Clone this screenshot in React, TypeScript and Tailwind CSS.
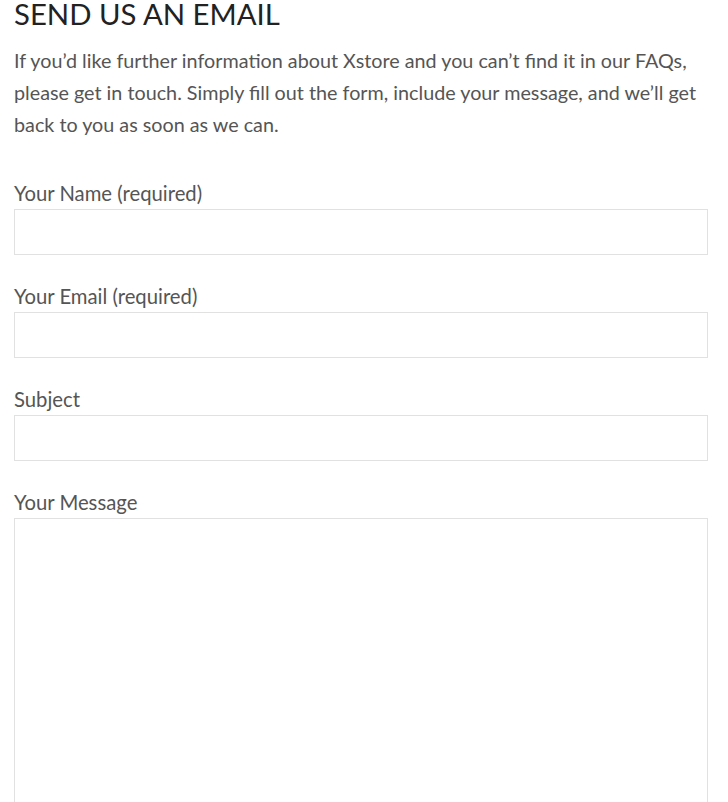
export default function App() {
  const fields = ['Your Name (required)', 'Your Email (required)', 'Subject'];
  return (
    <div className="min-h-screen bg-white pl-[14px] font-['Lato','Liberation_Sans',sans-serif]">
      <div className="w-[694px]">
        <h2 className="text-[29.3px] leading-[28px] text-[#222] font-normal">SEND US AN EMAIL</h2>
        <p className="mt-[16.5px] text-[19.75px] leading-[32px] text-[#555]">
          If you’d like further information about Xstore and you can’t find it in our FAQs,
          <br />
          please get in touch. Simply fill out the form, include your message, and we’ll get
          <br />
          back to you as soon as we can.
        </p>
        <form className="mt-[39.5px] flex flex-col gap-[28px]">
          {fields.map((f) => (
            <label key={f} className="block">
              <span className="block text-[20.3px] leading-[27px] text-[#555]">{f}</span>
              <input type="text" className="mt-[2px] block h-[46px] w-full border border-[#e1e1e1] bg-white outline-none" />
            </label>
          ))}
          <label className="block">
            <span className="block text-[20.3px] leading-[27px] text-[#555]">Your Message</span>
            <textarea className="mt-[2px] block h-[320px] w-full resize-none border border-[#e1e1e1] bg-white outline-none" />
          </label>
        </form>
      </div>
    </div>
  );
}
